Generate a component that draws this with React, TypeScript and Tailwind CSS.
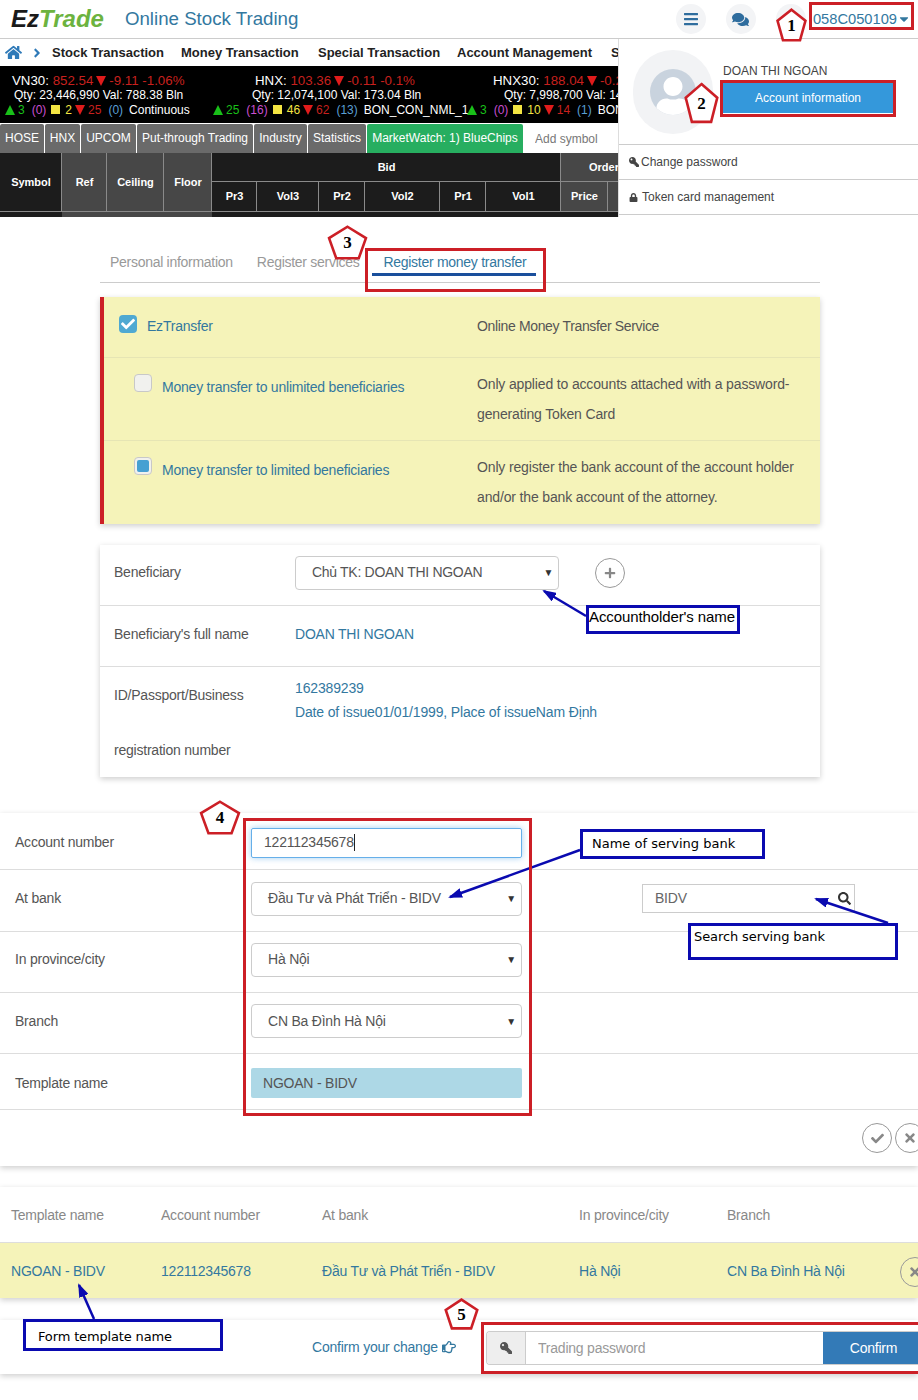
import { ReactNode } from "react";
import {
  FaAngleRight,
  FaBars,
  FaCaretDown,
  FaCheck,
  FaComments,
  FaHome,
  FaKey,
  FaLock,
  FaPlus,
  FaRegHandPointRight,
  FaSearch,
  FaTimes,
  FaUser,
} from "react-icons/fa";

const sans = "font-['Liberation_Sans',Arial,sans-serif]";

function Tri({ up }: { up?: boolean }) {
  return up ? (
    <span className="mr-[3px] inline-block h-0 w-0 border-x-[5px] border-b-[10px] border-x-transparent border-b-[#19c019] align-[-1px]" />
  ) : (
    <span className="mx-[3px] inline-block h-0 w-0 border-x-[5px] border-t-[10px] border-x-transparent border-t-[#e01b1b] align-[-1px]" />
  );
}

function Counts({ a, b, c, d, e, tail }: { a: string; b: string; c: string; d: string; e: string; tail: string }) {
  return (
    <>
      <Tri up />
      <span className="text-[#19c019]">{a}</span>
      <span className="ml-[7px] text-[#c94fd0]">{b}</span>
      <span className="mx-[5px] inline-block h-[9px] w-[9px] bg-[#f4e542]" />
      <span className="text-[#f4e542]">{c}</span>
      <Tri />
      <span className="text-[#c8201e]">{d}</span>
      <span className="ml-[7px] text-[#5a9fd4]">{e}</span>
      <span className="ml-[6px] text-white">{tail}</span>
    </>
  );
}

function Ticker() {
  return (
    <div className="flex h-[57px] overflow-hidden whitespace-nowrap bg-black pt-[7px] text-[12px] leading-[15px] tracking-normal text-white">
      <div className="w-[213px] shrink-0">
        <div className="pl-[12px] text-[13.3px]">
          VN30: <span className="text-[#c8201e]">852.54</span>
          <Tri />
          <span className="text-[#c8201e]">-9.11 -1.06%</span>
        </div>
        <div className="pl-[14px]">Qty: 23,446,990 Val: 788.38 Bln</div>
        <div className="pl-[5px]">
          <Counts a="3" b="(0)" c="2" d="25" e="(0)" tail="Continuous" />
        </div>
      </div>
      <div className="w-[254px] shrink-0">
        <div className="pl-[42px] text-[13.3px]">
          HNX: <span className="text-[#c8201e]">103.36</span>
          <Tri />
          <span className="text-[#c8201e]">-0.11 -0.1%</span>
        </div>
        <div className="pl-[39px]">Qty: 12,074,100 Val: 173.04 Bln</div>
        <div>
          <Counts a="25" b="(16)" c="46" d="62" e="(13)" tail="BON_CON_NML_1" />
        </div>
      </div>
      {/* runs on under the account menu, so it stops at the menu edge */}
      <div className="w-[151px] shrink-0 overflow-hidden">
        <div className="pl-[26px] text-[13.3px]">
          HNX30: <span className="text-[#c8201e]">188.04</span>
          <Tri />
          <span className="text-[#c8201e]">-0.29</span>
        </div>
        <div className="pl-[37px]">Qty: 7,998,700 Val: 142</div>
        <div>
          <Counts a="3" b="(0)" c="10" d="14" e="(1)" tail="BON" />
        </div>
      </div>
    </div>
  );
}

const marketTabs = [
  { name: "HOSE", w: "w-[44px]" },
  { name: "HNX", w: "w-[35px]" },
  { name: "UPCOM", w: "w-[55px]" },
  { name: "Put-through Trading", w: "w-[116px]" },
  { name: "Industry", w: "w-[53px]" },
  { name: "Statistics", w: "w-[58px]" },
];

function HeadCell({ w, dark, children }: { w: string; dark?: boolean; children?: ReactNode }) {
  return (
    <div
      className={`flex h-full shrink-0 items-center justify-center border-r border-[#8a8a8a] pl-[1px] text-[11px] font-bold tracking-normal text-white ${w} ${
        dark ? "bg-[#1c1c1c]" : "bg-[#474747]"
      }`}
    >
      {children}
    </div>
  );
}

function BoardHeader() {
  return (
    <div className="h-[64px] overflow-hidden bg-[#1c1c1c]">
      <div className="flex h-[59px] w-[760px] border-b border-[#8a8a8a]">
        <HeadCell w="w-[62px]" dark>Symbol</HeadCell>
        <HeadCell w="w-[45px]">Ref</HeadCell>
        <HeadCell w="w-[57px]">Ceiling</HeadCell>
        <HeadCell w="w-[48px]">Floor</HeadCell>
        <div className="w-[349px] shrink-0">
          <div className="h-[29px] border-b border-[#8a8a8a]">
            <HeadCell w="w-full" dark>Bid</HeadCell>
          </div>
          <div className="flex h-[29px]">
            <HeadCell w="w-[45px]" dark>Pr3</HeadCell>
            <HeadCell w="w-[62px]" dark>Vol3</HeadCell>
            <HeadCell w="w-[46px]" dark>Pr2</HeadCell>
            <HeadCell w="w-[75px]" dark>Vol2</HeadCell>
            <HeadCell w="w-[46px]" dark>Pr1</HeadCell>
            <HeadCell w="w-[75px]" dark>Vol1</HeadCell>
          </div>
        </div>
        <div className="w-[120px] shrink-0">
          <div className="h-[29px] border-b border-[#8a8a8a] bg-[#474747]">
            <div className="flex h-full items-center pl-[28px] text-[11px] font-bold tracking-normal text-white">Order</div>
          </div>
          <div className="flex h-[29px]">
            <HeadCell w="w-[47px]">Price</HeadCell>
            <HeadCell w="w-[60px]" />
          </div>
        </div>
      </div>
      <div className="flex h-[5px]">
        <div className="w-[62px] bg-[#1c1c1c]" />
        <div className="w-[150px] bg-[#474747]" />
      </div>
    </div>
  );
}

function AccountMenu() {
  return (
    <div className="absolute left-[618px] top-[39px] h-[178px] w-[300px] border-l border-[#ddd] bg-white text-[12px] tracking-normal text-[#444]">
      <div className="flex h-[106px] border-b border-[#ccc]">
        <div className="ml-[14px] mt-[11px] flex h-[84px] w-[80px] items-center justify-center rounded-full bg-[#f2f3f5]">
          <div className="flex h-[46px] w-[46px] items-end justify-center overflow-hidden rounded-full bg-[#c9d3de]">
            <FaUser className="text-[38px] text-white" />
          </div>
        </div>
        <div className="ml-[10px] pt-[25px]">
          <div className="leading-[14px]">DOAN THI NGOAN</div>
          <div className="mt-[5px] flex h-[30px] w-[170px] items-center justify-center bg-[#3498db] text-[12px] text-white">
            Account information
          </div>
        </div>
      </div>
      <div className="flex h-[35px] items-center gap-[2px] border-b border-[#ccc] pl-[10px]">
        <FaKey className="-scale-x-100 text-[10px] text-[#444]" />
        <span>Change password</span>
      </div>
      <div className="flex h-[35px] items-center gap-[4px] border-b border-[#ccc] pl-[10px]">
        <FaLock className="text-[9px] text-[#444]" />
        <span>Token card management</span>
      </div>
    </div>
  );
}

function CircleBtn({ children, className }: { children: ReactNode; className?: string }) {
  return (
    <span className={`flex h-[30px] w-[30px] shrink-0 items-center justify-center rounded-full border border-[#999] bg-white text-[#888] ${className ?? ""}`}>
      {children}
    </span>
  );
}

function Select({ value }: { value: string }) {
  return (
    <div className="flex h-[34px] w-[271px] items-center justify-between rounded-[4px] border border-[#ccc] bg-white pl-[16px] pr-[5px] text-[#555]">
      <span>{value}</span>
      <span className="text-[10px] text-[#333]">▼</span>
    </div>
  );
}

function Check({ on }: { on?: boolean }) {
  return (
    <span className="flex h-[18px] w-[18px] shrink-0 items-center justify-center rounded-[4px] border border-[#c8c8c8] bg-[#f1f1ee]">
      {on && <span className="h-[12px] w-[12px] rounded-[2px] bg-[#46a0d2]" />}
    </span>
  );
}

function FormRow({ label, h, children }: { label: string; h: string; children?: ReactNode }) {
  return (
    <div className={`flex items-center border-b border-[#ddd] ${h}`}>
      <div className="w-[251px] shrink-0 pl-[15px] text-[#555]">{label}</div>
      {children}
    </div>
  );
}

function Pentagon({ n, x, y, w, h }: { n: string; x: string; y: string; w: string; h: string }) {
  return (
    <div className={`absolute flex items-center justify-center ${x} ${y} ${w} ${h}`}>
      <svg viewBox="0 0 40 40" preserveAspectRatio="none" className="absolute inset-0 h-full w-full">
        <polygon
          points="20,2 38,15 31,38 9,38 2,15"
          fill="#fff"
          stroke="#cc1f26"
          strokeWidth="2.6"
          vectorEffect="non-scaling-stroke"
        />
      </svg>
      <span className="relative font-['Liberation_Serif',serif] text-[17px] font-bold leading-none text-black">{n}</span>
    </div>
  );
}

function NoteBox({ className, children }: { className: string; children: ReactNode }) {
  return <div className={`absolute border-[3px] border-[#0a0ab0] bg-white text-black ${className}`}>{children}</div>;
}

function Callouts() {
  const arrows = [
    [586, 616, 544, 591],
    [580, 850, 450, 897],
    [888, 923, 816, 899],
    [94, 1319, 79, 1285],
  ];
  return (
    <>
      <svg className="absolute left-0 top-0 h-[1400px] w-[918px]" viewBox="0 0 918 1400">
        <defs>
          <marker id="head" markerWidth="14" markerHeight="10" refX="12" refY="5" orient="auto" markerUnits="userSpaceOnUse">
            <path d="M0 0 L14 5 L0 10 Z" fill="#0a0ab0" />
          </marker>
        </defs>
        {arrows.map(([a, b, c, d]) => (
          <line key={a} x1={a} y1={b} x2={c} y2={d} stroke="#0a0ab0" strokeWidth="2.5" markerEnd="url(#head)" />
        ))}
      </svg>
      <div className="absolute left-[809px] top-[2px] h-[28px] w-[105px] border-[3px] border-[#cc1f26]" />
      <div className="absolute left-[720px] top-[80px] h-[37px] w-[176px] border-[3px] border-[#cc1f26]" />
      <div className="absolute left-[365px] top-[248px] h-[44px] w-[181px] border-[3px] border-[#cc1f26]" />
      <div className="absolute left-[243px] top-[818px] h-[298px] w-[289px] border-[3px] border-[#cc1f26]" />
      <div className="absolute left-[481px] top-[1322px] h-[52px] w-[437px] border-[3px] border-r-0 border-[#cc1f26]" />
      <Pentagon n="1" x="left-[776px]" y="top-[8px]" w="w-[31px]" h="h-[34px]" />
      <Pentagon n="2" x="left-[684px]" y="top-[82px]" w="w-[35px]" h="h-[42px]" />
      <Pentagon n="3" x="left-[327px]" y="top-[225px]" w="w-[41px]" h="h-[35px]" />
      <Pentagon n="4" x="left-[199px]" y="top-[800px]" w="w-[42px]" h="h-[35px]" />
      <Pentagon n="5" x="left-[444px]" y="top-[1298px]" w="w-[35px]" h="h-[32px]" />
      <NoteBox className="left-[586px] top-[605px] h-[29px] w-[154px] text-[15px] leading-[17px] tracking-[-0.1px]">
        Accountholder&apos;s name
      </NoteBox>
      <NoteBox className="left-[580px] top-[829px] h-[30px] w-[185px] pl-[9px] font-['DejaVu_Sans',sans-serif] text-[13px] leading-[24px] tracking-normal">
        Name of serving bank
      </NoteBox>
      <NoteBox className="left-[688px] top-[923px] h-[37px] w-[210px] pl-[3px] font-['DejaVu_Sans',sans-serif] text-[13px] leading-[22px] tracking-[-0.1px]">
        Search serving bank
      </NoteBox>
      <NoteBox className="left-[23px] top-[1319px] h-[32px] w-[200px] pl-[12px] font-['DejaVu_Sans',sans-serif] text-[13px] leading-[29px] tracking-[-0.15px]">
        Form template name
      </NoteBox>
    </>
  );
}

export default function App() {
  return (
    <div className={`relative h-[1400px] w-[918px] overflow-hidden bg-white text-[14px] tracking-[-0.22px] ${sans}`}>
      {/* top bar */}
      <header className="flex h-[39px] items-center border-b border-[#ccc] tracking-normal">
        <div className="ml-[11px] text-[24px] font-bold italic leading-none">
          <span className="text-[#1a1a1a]">Ez</span>
          <span className="text-[#6cb33f]">Trade</span>
        </div>
        <div className="ml-[21px] text-[18.7px] text-[#33789f]">Online Stock Trading</div>
        <div className="ml-auto flex items-center">
          <span className="flex h-[30px] w-[30px] items-center justify-center rounded-full bg-[#f3f4f6] text-[#2f6d9e]">
            <FaBars className="text-[16px]" />
          </span>
          <span className="ml-[20px] flex h-[30px] w-[30px] items-center justify-center rounded-full bg-[#f3f4f6] text-[#2f6d9e]">
            <FaComments className="text-[17px]" />
          </span>
          <span className="ml-[20px] h-[30px] w-[30px] rounded-full bg-[#f3f4f6]" />
          <span className="ml-[7px] flex items-center text-[14.7px] text-[#33789f]">
            058C050109
            <FaCaretDown className="text-[14px]" />
          </span>
          <span className="w-[7px]" />
        </div>
      </header>

      <nav className="flex h-[27px] items-center whitespace-nowrap bg-white text-[13px] font-bold tracking-normal text-[#222]">
        <FaHome className="ml-[5px] text-[17px] text-[#2f7ab8]" />
        <FaAngleRight className="ml-[8px] text-[14px] text-[#2f7ab8]" />
        <span className="ml-[8px] w-[129px]">Stock Transaction</span>
        <span className="w-[137px]">Money Transaction</span>
        <span className="w-[139px]">Special Transaction</span>
        <span className="w-[154px]">Account Management</span>
        <span>S</span>
      </nav>

      <Ticker />

      <div className="flex h-[30px] items-stretch whitespace-nowrap bg-white pt-[1px] text-[12px] tracking-normal text-white">
        {marketTabs.map((t) => (
          <div key={t.name} className={`mr-[1px] flex items-center justify-center rounded-t-[2px] bg-[#6a6a6a] pb-[1px] ${t.w}`}>
            {t.name}
          </div>
        ))}
        <div className="flex w-[156px] items-center justify-center rounded-t-[2px] bg-[#27ae60] pb-[1px]">MarketWatch: 1) BlueChips</div>
        <input
          placeholder="Add symbol"
          className="ml-[6px] w-[90px] border-none bg-white pl-[6px] text-[12px] text-[#777] placeholder:text-[#777]"
        />
      </div>

      <BoardHeader />

      <AccountMenu />

      {/* service registration */}
      <div className="ml-[100px] mt-[31px] flex h-[35px] w-[720px] items-center border-b border-[#ccc] pb-[6px] tracking-[-0.28px] text-[#999]">
        <span className="ml-[10px]">Personal information</span>
        <span className="ml-[24px]">Register services</span>
        <span className="relative ml-[24px] text-[#33789f]">
          Register money transfer
          <span className="absolute -left-[11px] -right-[10px] top-[21px] h-[3px] bg-[#1a4f9c]" />
        </span>
      </div>

      <section className="ml-[100px] mt-[14px] w-[720px] border-l-4 border-[#cc1f26] bg-[#f5f3b9] shadow-[0_2px_6px_rgba(0,0,0,0.2)]">
        <div className="flex h-[61px] items-center border-b border-[#e6e5b4] pb-[2px] pl-[15px]">
          <span className="-mt-[5px] flex h-[18px] w-[18px] items-center justify-center rounded-[4px] bg-[#4fa9d2]">
            <FaCheck className="text-[14px] text-white" />
          </span>
          <span className="ml-[10px] w-[330px] text-[#33789f]">EzTransfer</span>
          <span className="tracking-[-0.35px] text-[#555]">Online Money Transfer Service</span>
        </div>
        <div className="flex h-[83px] border-b border-[#e6e5b4] pl-[30px]">
          <div className="mt-[16px]">
            <Check />
          </div>
          <span className="ml-[10px] mt-[19px] w-[315px] text-[#33789f]">Money transfer to unlimited beneficiaries</span>
          <span className="mt-[11px] w-[330px] leading-[30px] tracking-[-0.15px] text-[#555]">
            Only applied to accounts attached with a password-generating Token Card
          </span>
        </div>
        <div className="flex h-[83px] pl-[30px]">
          <div className="mt-[16px]">
            <Check on />
          </div>
          <span className="ml-[10px] mt-[19px] w-[315px] text-[#33789f]">Money transfer to limited beneficiaries</span>
          <span className="mt-[11px] w-[330px] leading-[30px] tracking-[-0.15px] text-[#555]">
            Only register the bank account of the account holder and/or the bank account of the attorney.
          </span>
        </div>
      </section>

      <section className="ml-[100px] mt-[21px] w-[720px] bg-white shadow-[0_2px_6px_rgba(0,0,0,0.2)]">
        <div className="flex h-[61px] items-center border-b border-[#ddd] pb-[5px]">
          <span className="w-[195px] pl-[14px] text-[#555]">Beneficiary</span>
          <div className="flex h-[34px] w-[264px] items-center justify-between rounded-[4px] border border-[#ccc] pl-[16px] pr-[5px] tracking-[-0.3px] text-[#555]">
            <span>Chủ TK: DOAN THI NGOAN</span>
            <span className="text-[10px] text-[#333]">▼</span>
          </div>
          <CircleBtn className="ml-[36px]">
            <FaPlus className="text-[12px]" />
          </CircleBtn>
        </div>
        <div className="flex h-[61px] items-center border-b border-[#ddd] pb-[3px]">
          <span className="w-[195px] pl-[14px] text-[#555]">Beneficiary&apos;s full name</span>
          <span className="text-[#33789f]">DOAN THI NGOAN</span>
        </div>
        <div className="flex h-[110px]">
          <span className="w-[195px] pl-[14px] pr-[30px] pt-[1px] leading-[55px] text-[#555]">ID/Passport/Business registration number</span>
          <div className="pt-[9px] leading-[24px] tracking-[-0.15px] text-[#33789f]">
            <div>162389239</div>
            <div>Date of issue01/01/1999, Place of issueNam Định</div>
          </div>
        </div>
      </section>

      {/* beneficiary bank */}
      <section className="mt-[36px] bg-white shadow-[0_2px_6px_rgba(0,0,0,0.2)]">
        <FormRow label="Account number" h="h-[57px] pt-[3px]">
          <div className="flex h-[30px] w-[271px] items-center rounded-[2px] border border-[#66afe9] pl-[12px] text-[#555] shadow-[0_0_6px_rgba(102,175,233,0.6)]">
            122112345678
            <span className="h-[17px] w-[1px] bg-[#222]" />
          </div>
        </FormRow>
        <FormRow label="At bank" h="h-[62px] pb-[4px]">
          <Select value="Đầu Tư và Phát Triển - BIDV" />
          <div className="ml-[120px] flex h-[29px] w-[213px] items-center justify-between border border-[#ccc] pl-[12px] pr-[3px] text-[#666]">
            <span>BIDV</span>
            <FaSearch className="text-[13px] text-[#333]" />
          </div>
        </FormRow>
        <FormRow label="In province/city" h="h-[61px] pb-[5px]">
          <Select value="Hà Nội" />
        </FormRow>
        <FormRow label="Branch" h="h-[61px] pb-[4px]">
          <Select value="CN Ba Đình Hà Nội" />
        </FormRow>
        <FormRow label="Template name" h="h-[56px] pt-[3px]">
          <div className="flex h-[30px] w-[271px] items-center rounded-[2px] bg-[#add8e6] pl-[12px] text-[#555]">NGOAN - BIDV</div>
        </FormRow>
        <div className="flex h-[56px] items-center justify-end">
          <CircleBtn className="mr-[3px]">
            <FaCheck className="text-[13px]" />
          </CircleBtn>
          <CircleBtn className="-mr-[7px]">
            <FaTimes className="text-[14px]" />
          </CircleBtn>
        </div>
      </section>

      {/* saved templates */}
      <section className="mt-[21px] bg-white shadow-[0_2px_6px_rgba(0,0,0,0.2)]">
        <div className="flex h-[56px] items-center border-b border-[#ddd] pt-[2px] text-[#888]">
          <span className="w-[161px] shrink-0 pl-[11px]">Template name</span>
          <span className="w-[161px] shrink-0">Account number</span>
          <span className="w-[257px] shrink-0">At bank</span>
          <span className="w-[148px] shrink-0">In province/city</span>
          <span>Branch</span>
        </div>
        <div className="flex h-[55px] items-center bg-[#f5f3b9] pt-[2px] text-[#33789f]">
          <span className="w-[161px] shrink-0 pl-[11px]">NGOAN - BIDV</span>
          <span className="w-[161px] shrink-0">122112345678</span>
          <span className="w-[257px] shrink-0">Đầu Tư và Phát Triển - BIDV</span>
          <span className="w-[148px] shrink-0">Hà Nội</span>
          <span className="w-[173px] shrink-0">CN Ba Đình Hà Nội</span>
          <CircleBtn className="!bg-transparent">
            <FaTimes className="text-[14px]" />
          </CircleBtn>
        </div>
      </section>

      <section className="mt-[22px] flex h-[54px] items-center bg-white pt-[2px] shadow-[0_2px_6px_rgba(0,0,0,0.2)]">
        <span className="-mt-[2px] ml-[312px] flex w-[174px] items-center text-[#33789f]">
          Confirm your change
          <FaRegHandPointRight className="ml-[4px] text-[14px]" />
        </span>
        <div className="flex h-[34px] flex-1 overflow-hidden rounded-l-[4px] border border-r-0 border-[#ccc]">
          <span className="flex w-[39px] shrink-0 items-center justify-center border-r border-[#ccc] bg-[#eee] text-[#555]">
            <FaKey className="-scale-x-100 text-[12px]" />
          </span>
          <input placeholder="Trading password" className="min-w-0 flex-1 pl-[12px] text-[14px] placeholder:text-[#999]" />
          <span className="flex w-[95px] shrink-0 items-center justify-center bg-[#337ab7] pl-[6px] text-white">Confirm</span>
        </div>
      </section>

      <Callouts />
    </div>
  );
}
